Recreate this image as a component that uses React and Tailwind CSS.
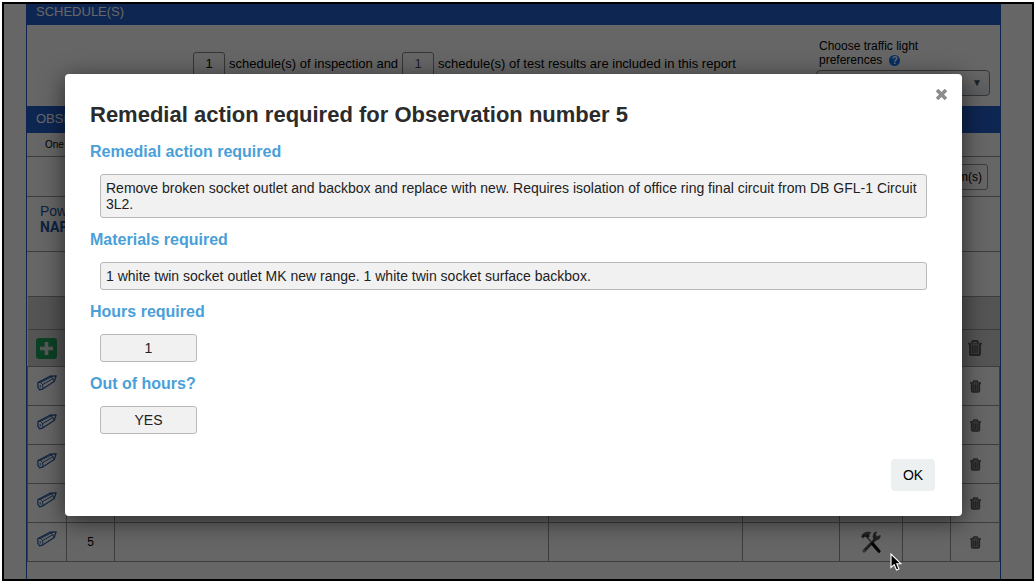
import React from 'react';

const rows = [1, 2, 3, 4, 5];

function Pencil() {
  return (
    <svg viewBox="0 0 20 16" className="h-4 w-5" fill="none" stroke="#2a5ca4" strokeLinejoin="round" strokeLinecap="round">
      <path strokeWidth="1.2" d="M1 7.6 L13 1.2 L19.2 .8 L17.2 6.6 L6 13.8 L2.6 14.8 L.8 12.2 Z" />
      <path strokeWidth="1" d="M1 7.6 L3.4 7.4 L5.6 9.6 L6 13.8 M3.4 7.4 L15 1.6 M5.6 9.6 L16 3.6 M13 1.2 L16 3.6 L17.2 6.6 M3.2 10.4 V12.2" />
    </svg>
  );
}

function Trash({ large }) {
  return (
    <svg viewBox="0 0 14 16" className={large ? 'h-4 w-3.5' : 'h-[13px] w-[11px]'} fill="none" stroke="#585858" strokeWidth="1.9">
      <path d="M0 3.6 H14 M4.2 3.2 V2 Q4.2 1 5.2 1 H8.8 Q9.8 1 9.8 2 V3.2" />
      <path d="M2 3.6 V13.4 Q2 15 3.6 15 H10.4 Q12 15 12 13.4 V3.6" fill="#909090" />
      <path d="M4.8 5.5 V13 M7 5.5 V13 M9.2 5.5 V13" strokeWidth="1.3" />
    </svg>
  );
}

function Tools() {
  return (
    <svg viewBox="0 0 22 24" className="h-6 w-[22px]" fill="none">
      <path d="M15.5 9 L4 21" stroke="#505050" strokeWidth="3" strokeLinecap="round" />
      <path d="M13.6 10.4 Q11.8 7 13.3 3.8 Q14.6 1.4 17.2 1.4 L15.8 4.4 L17.3 6.4 L20.5 4.8 Q21 8.2 18.2 9.8 Q16 11 13.6 10.4 Z" fill="#555" />
      <circle cx="4" cy="20.8" r="0.9" fill="#bbb" />
      <path d="M7.5 7.5 L13 14" stroke="#777" strokeWidth="1.8" />
      <path d="M12.4 13.6 L19 21.2" stroke="#111" strokeWidth="3.2" strokeLinecap="round" />
      <path d="M1.2 6.8 Q1.8 3.6 4.8 2.4 Q8.2 1 11.4 2.8 Q9.4 3.2 9.4 4.8 L9.6 6.4 L7.4 8.6 L5.8 7 Q4.4 6.4 3.8 7.4 L3.2 8.6 Z" fill="#444" />
      <path d="M4.4 4.2 Q6.6 2.8 8.8 3.2" stroke="#999" strokeWidth="0.8" />
    </svg>
  );
}

function Field({ id, label, value, small, lines = 1 }) {
  const box = 'ml-2.5 mt-2.5 block rounded-[3px] border border-[#b9b9b9] bg-[#f1f1f1] text-sm text-[#222] outline-none';
  return (
    <div className="mb-2.5">
      <label htmlFor={id} className="block text-base leading-6 font-bold text-[#4a9fd8]">{label}</label>
      {lines > 1 ? (
        <textarea id={id} readOnly defaultValue={value} className={`${box} h-11 w-[calc(100%-10px)] resize-none overflow-hidden px-[5px] py-[5px] leading-4`} />
      ) : (
        <input id={id} readOnly defaultValue={value} className={`${box} h-7 px-[5px] ${small ? 'w-[97px] text-center' : 'w-[calc(100%-10px)]'}`} />
      )}
    </div>
  );
}

export default function App() {
  return (
    <div className="h-screen bg-white p-0.5 font-['Liberation_Sans',Arial,sans-serif] text-black">
      <div className="relative h-full overflow-hidden border-2 border-black">
        {/* Report page */}
        <div className="mr-[31px] ml-[22px] h-full border-x border-[#2458c0] bg-white">
          <h2 className="h-[21px] bg-[#2560cc] pl-[9px] text-[13px] leading-4 font-medium text-white">SCHEDULE(S)</h2>
          <div className="flex h-[81px] justify-between pr-2.5 pl-[166px] text-[13px]">
            <div className="flex items-start gap-1 pt-[27px] leading-6">
              <input aria-label="Schedules of inspection" defaultValue="1" className="h-6 w-8 rounded-[3px] border border-[#888] text-center" />
              <span>schedule(s) of inspection and</span>
              <input aria-label="Schedules of test results" disabled defaultValue="1" className="h-6 w-8 rounded-[3px] border border-[#888] text-center text-gray-600" />
              <span>schedule(s) of test results are included in this report</span>
            </div>
            <div className="w-[174px] pt-3.5 text-xs">
              <label htmlFor="traffic" className="block pl-[3px] leading-[14px]">
                Choose traffic light<br />preferences
                <span className="ml-[7px] inline-block h-[11px] w-[11px] rounded-full bg-[#1673ff] text-center text-[10px] leading-[11px] font-bold text-white">?</span>
              </label>
              <div className="relative mt-[3px]">
                <select id="traffic" className="h-[26px] w-full appearance-none rounded border border-[#888] bg-linear-to-b from-white to-gray-200"></select>
                <span className="pointer-events-none absolute top-2 right-2 text-[10px] leading-[10px] text-gray-600">▼</span>
              </div>
            </div>
          </div>
          <h2 className="h-[27px] bg-[#2560cc] pl-[9px] text-[13px] leading-[26px] font-medium text-white">OBSERVATIONS</h2>
          <p className="h-6 border-b border-[#999] pl-[18px] text-[10px] leading-6">One</p>
          <div className="flex h-10 items-center justify-end border-b border-[#999] pr-3">
            <button className="h-[26px] rounded-[3px] border border-[#999] px-[5px] text-xs">Add item(s)</button>
          </div>
          <div className="h-[55px] border-b border-[#999] pt-1.5 pl-[13px] text-sm leading-4 text-[#2455a8]">
            Power
            <strong className="block font-['Roboto',sans-serif]">NAPIT</strong>
          </div>
          <div className="h-11"></div>
          <table className="w-full table-fixed border-collapse text-xs">
            <colgroup>
              <col className="w-[39px]" />
              <col className="w-12" />
              <col />
              <col className="w-[194px]" />
              <col className="w-[97px]" />
              <col className="w-[63px]" />
              <col className="w-12" />
              <col className="w-[49px]" />
            </colgroup>
            <thead className="bg-[#d2d2d2]">
              <tr className="h-[33px] border-y border-[#999]"><th colSpan="8"></th></tr>
              <tr className="h-[37px] border-b border-[#999]">
                <td>
                  <button aria-label="Add observation" className="ml-2 block h-[21px] w-[21px] rounded-[3px] bg-[#20a35e] p-1">
                    <svg viewBox="0 0 13 13" stroke="#ddd" strokeWidth="3.6"><path d="M6.5 0 V13 M0 6.5 H13" /></svg>
                  </button>
                </td>
                <td colSpan="6"></td>
                <td><button aria-label="Delete all" className="flex w-full justify-center"><Trash large /></button></td>
              </tr>
            </thead>
            <tbody>
              {rows.map(n => (
                <tr key={n} className="h-[39px]">
                  <td className="border border-[#999] pb-1.5"><button aria-label={`Edit ${n}`} className="flex w-full justify-center"><Pencil /></button></td>
                  <td className="border border-[#999] text-center">{n}</td>
                  <td className="border border-[#999]"></td>
                  <td className="border border-[#999]"></td>
                  <td className="border border-[#999]"></td>
                  <td className="border border-[#999]">{n === 5 && <button aria-label="Remedial action" className="flex w-full justify-center"><Tools /></button>}</td>
                  <td className="border border-[#999]"></td>
                  <td className="border border-[#999]"><button aria-label={`Delete ${n}`} className="flex w-full justify-center"><Trash /></button></td>
                </tr>
              ))}
            </tbody>
          </table>
        </div>

        {/* Dialog over the dimmed page */}
        <div className="absolute inset-0 bg-black/60 pt-[70px] pr-[70px] pl-[61px]">
          <div role="dialog" aria-labelledby="dialog-title" className="relative rounded bg-white pt-[25px] pr-[35px] pb-[25px] pl-[25px] shadow-[0_5px_25px_rgba(0,0,0,0.6)]">
            <button aria-label="Close" className="absolute top-[15px] right-[15px] h-[11px] w-[11px]">
              <svg viewBox="0 0 11 11" stroke="#8c8c8c" strokeWidth="3.6"><path d="M1 1 L10 10 M10 1 L1 10" /></svg>
            </button>
            <h1 id="dialog-title" className="mb-[9px] text-[22px] leading-8 font-bold text-[#2b2b2b]">Remedial action required for Observation number 5</h1>
            <Field id="action" label="Remedial action required" lines={2} value="Remove broken socket outlet and backbox and replace with new. Requires isolation of office ring final circuit from DB GFL-1 Circuit 3L2." />
            <Field id="materials" label="Materials required" value="1 white twin socket outlet MK new range. 1 white twin socket surface backbox." />
            <Field id="hours" label="Hours required" small value="1" />
            <Field id="out" label="Out of hours?" small value="YES" />
            <div className="-mr-2 flex justify-end pt-[15px]">
              <button className="h-8 w-11 rounded bg-[#ecf0f1] text-sm">OK</button>
            </div>
          </div>
        </div>

        {/* Mouse pointer */}
        <svg viewBox="0 0 12 18" className="absolute right-[130px] bottom-2 h-[18px] w-3" fill="#000" stroke="#fff" strokeWidth="1.1">
          <path d="M1 1 V14.5 L4.2 11.7 L6.5 17 L9 16 L6.8 10.8 H11 Z" />
        </svg>
      </div>
    </div>
  );
}
